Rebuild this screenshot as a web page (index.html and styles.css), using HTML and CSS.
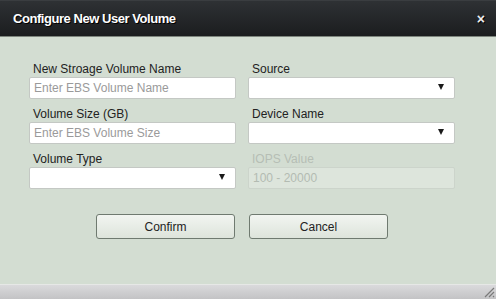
FILE: index.html
```html
<html>
  <head>
    <link rel="stylesheet" href="styles.css">
  </head>
  <body>
    <div class="dialog">
      <div class="titlebar">
        <span class="title">Configure New User Volume</span>
        <span class="close">&#215;</span>
      </div>
      <div class="content">
        <div class="fields">
          <div class="field">
            <label>New Stroage Volume Name</label>
            <input type="text" placeholder="Enter EBS Volume Name" />
          </div>
          <div class="field">
            <label>Source</label>
            <div class="select"><span class="arrow"></span></div>
          </div>
          <div class="field">
            <label>Volume Size (GB)</label>
            <input type="text" placeholder="Enter EBS Volume Size" />
          </div>
          <div class="field">
            <label>Device Name</label>
            <div class="select"><span class="arrow"></span></div>
          </div>
          <div class="field">
            <label>Volume Type</label>
            <div class="select"><span class="arrow"></span></div>
          </div>
          <div class="field disabled">
            <label>IOPS Value</label>
            <div class="fake-input">100 - 20000</div>
          </div>
        </div>
        <div class="buttons">
          <button>Confirm</button>
          <button>Cancel</button>
        </div>
      </div>
      <div class="statusbar">
        <svg class="grip" width="12" height="12" viewBox="0 0 12 12">
          <path d="M11 2 L2 11 M11 6 L6 11 M11 10 L10 11" stroke="#7a7a7a" stroke-width="1.2" />
        </svg>
      </div>
    </div>
  </body>
</html>
```

FILE: styles.css
```css
body {
  margin: 0;
  font-family: "Liberation Sans", Arial, sans-serif;
}

.dialog {
  width: 496px;
  height: 299px;
  display: flex;
  flex-direction: column;
  background: #d3ddd2;
}

.titlebar {
  height: 37px;
  box-sizing: border-box;
  display: flex;
  align-items: center;
  justify-content: space-between;
  padding: 0 11px 0 13px;
  background: linear-gradient(#2e3134, #1b1d1f);
  border-top: 1px solid #3a3d40;
  border-bottom: 1px solid #7d857d;
}
.title {
  color: #fff;
  font-weight: bold;
  font-size: 13px;
  letter-spacing: -0.45px;
  text-shadow: 1px 1px 0 #000;
}
.close {
  color: #eee;
  font-weight: bold;
  font-size: 14px;
  text-shadow: 1px 1px 0 #000;
}

.content {
  flex: 1;
  padding: 25px 41px 0 29px;
}

.fields {
  display: grid;
  grid-template-columns: 207px 207px;
  column-gap: 12px;
  row-gap: 8px;
}
.field label {
  display: block;
  font-size: 12px;
  line-height: 14px;
  color: #222;
  padding-left: 4px;
  margin-bottom: 1px;
}
.field input,
.select,
.fake-input {
  display: block;
  width: 207px;
  height: 22px;
  box-sizing: border-box;
  border: 1px solid #c4c8c4;
  border-radius: 2px;
  background: #fff;
  font-family: "Liberation Sans", Arial, sans-serif;
  font-size: 12px;
  line-height: 20px;
  padding: 0 4px;
  margin: 0;
}
.field input::placeholder {
  color: #9a9a9a;
}
.select {
  position: relative;
}
.arrow {
  position: absolute;
  right: 10px;
  top: 6px;
  width: 0;
  height: 0;
  border-left: 3px solid transparent;
  border-right: 3px solid transparent;
  border-top: 6px solid #1a1a1a;
}
.disabled label {
  color: #b6beb5;
}
.disabled .fake-input {
  background: #dde5dc;
  border-color: #ccd4cb;
  color: #b3bbb2;
}

.buttons {
  display: flex;
  justify-content: center;
  gap: 14px;
  margin-top: 25px;
}
.buttons button {
  width: 139px;
  height: 25px;
  border: 1px solid #6f7a70;
  border-radius: 3px;
  background: linear-gradient(#f2f5f1, #dde4db);
  font-family: "Liberation Sans", Arial, sans-serif;
  font-size: 12px;
  color: #222;
}

.statusbar {
  height: 14px;
  border-top: 1px solid #e6e8e6;
  background: linear-gradient(#dadadc, #c3c3c5);
  display: flex;
  justify-content: flex-end;
  align-items: flex-end;
}
.grip {
  margin: 0 1px 1px 0;
}
```
